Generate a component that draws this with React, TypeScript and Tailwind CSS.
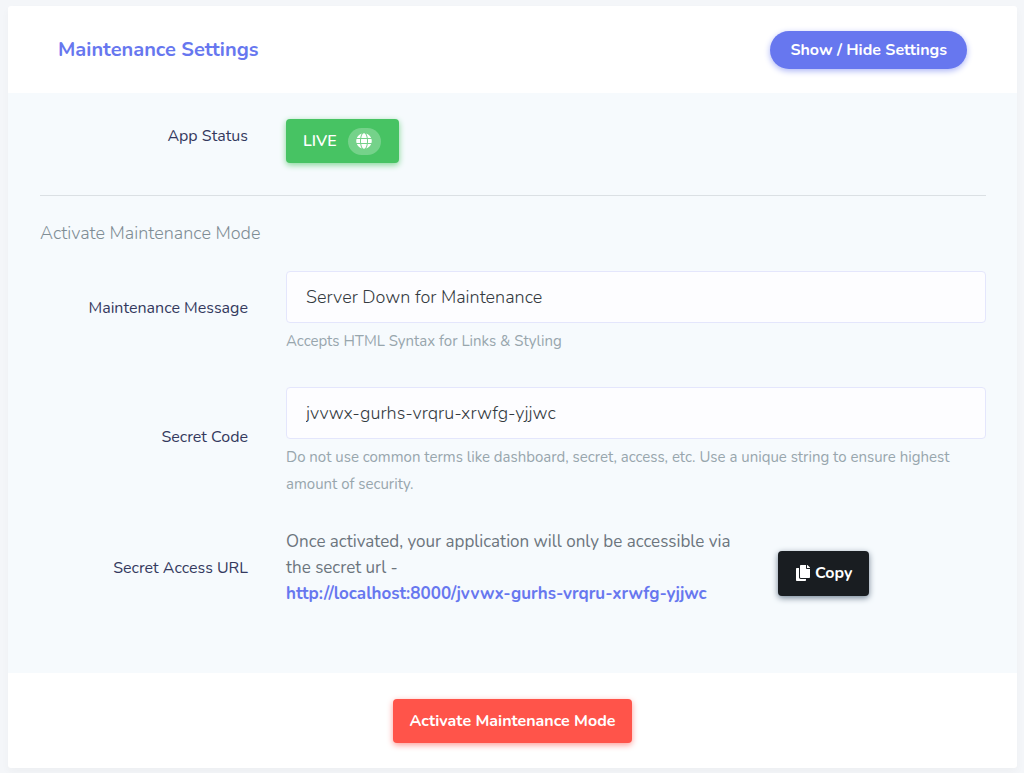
import { useState } from 'react';
import type { ReactNode } from 'react';
import { FaCopy, FaGlobe } from 'react-icons/fa';

const row = 'grid grid-cols-[208px_minmax(0,1fr)] gap-x-[38px]';
const label = 'text-right text-[16px] leading-6 text-[#34395e]';
const field =
  'block h-[52px] w-full rounded-[4px] border border-[#e4e6fc] bg-[#fdfdff] px-[19px] text-[18px] font-light text-[#343a40] outline-none focus:border-[#95a0f4]';

function Hint({ id, children }: { id: string; children: ReactNode }) {
  return (
    <p id={id} className="mt-[5px] text-[15px] leading-[27px] text-[#98a6ad]">
      {children}
    </p>
  );
}

export default function App() {
  const [open, setOpen] = useState(true);
  const [message, setMessage] = useState('Server Down for Maintenance');
  const [secret, setSecret] = useState('jvvwx-gurhs-vrqru-xrwfg-yjjwc');
  const url = `http://localhost:8000/${secret}`;

  return (
    <div className="min-h-screen bg-[#f4f6f9] pt-[6px] pr-[7px] pb-[5px] pl-2 font-[Nunito,Lato,sans-serif] text-[#6c757d]">
      <main className="rounded-[3px] bg-white shadow-[0_4px_8px_rgba(0,0,0,0.03)]">
        <header className="flex items-center justify-between px-[50px] pt-[25px] pb-6">
          <h1 className="text-[20px] leading-7 font-bold text-[#6777ef]">Maintenance Settings</h1>
          <button
            type="button"
            aria-expanded={open}
            onClick={() => setOpen(!open)}
            className="h-[38px] rounded-full bg-[#6777ef] px-5 text-[16px] leading-6 font-bold text-white shadow-[0_2px_6px_#acb5f6]"
          >
            Show / Hide Settings
          </button>
        </header>

        {open && (
          <section className="bg-[#f6fafd] pt-[26px] pr-[31px] pb-[66px] pl-8">
            <div className={row}>
              <span className={`${label} pt-[5px]`}>App Status</span>
              <div>
                <button
                  type="button"
                  className="flex h-11 items-center gap-[11px] rounded-[4px] bg-[#47c363] pr-[18px] pl-[17px] text-[16px] leading-6 font-semibold text-white shadow-[0_2px_6px_#81d694]"
                >
                  LIVE
                  <span className="flex h-[27px] w-[33px] items-center justify-center rounded-full bg-white/25">
                    <FaGlobe className="size-4" aria-hidden="true" />
                  </span>
                </button>
              </div>
            </div>

            <hr className="mt-8 border-[#dbe0e4]" />

            <h2 className="mt-6 text-[18px] leading-[27px] font-light text-[#7f8d95]">Activate Maintenance Mode</h2>

            <div className={`${row} mt-6`}>
              <label htmlFor="message" className={`${label} pt-[25px]`}>
                Maintenance Message
              </label>
              <div>
                <input
                  id="message"
                  type="text"
                  value={message}
                  onChange={(e) => setMessage(e.target.value)}
                  aria-describedby="message-hint"
                  className={field}
                />
                <Hint id="message-hint">Accepts HTML Syntax for Links &amp; Styling</Hint>
              </div>
            </div>

            <div className={`${row} mt-8 items-center`}>
              <label htmlFor="secret" className={`${label} pb-3`}>
                Secret Code
              </label>
              <div>
                <input
                  id="secret"
                  type="text"
                  value={secret}
                  onChange={(e) => setSecret(e.target.value)}
                  aria-describedby="secret-hint"
                  className={field}
                />
                <Hint id="secret-hint">
                  Do not use common terms like dashboard, secret, access, etc. Use a unique string to ensure highest
                  amount of security.
                </Hint>
              </div>
            </div>

            <div className={`${row} mt-[31px] items-center`}>
              <span className={label}>Secret Access URL</span>
              <div className="flex items-center gap-8">
                <p className="w-[460px] text-[17px] leading-[26px] text-[#6c757d]">
                  Once activated, your application will only be accessible via the secret url -{' '}
                  <a href={url} className="block font-bold text-[#6777ef]">
                    {url}
                  </a>
                </p>
                <button
                  type="button"
                  onClick={() => navigator.clipboard?.writeText(url)}
                  className="mt-[11px] flex h-[45px] items-center gap-1 rounded-[4px] bg-[#191d21] px-[17px] pb-px text-[16px] leading-6 font-bold text-white shadow-[0_2px_6px_#728394]"
                >
                  <FaCopy className="size-4" aria-hidden="true" />
                  Copy
                </button>
              </div>
            </div>
          </section>
        )}

        <footer className="flex justify-center pt-[26px] pb-[25px]">
          <button
            type="button"
            className="h-11 rounded-[4px] bg-[#ff544a] px-4 text-[16px] leading-6 font-bold text-white shadow-[0_2px_6px_#fd9b96]"
          >
            Activate Maintenance Mode
          </button>
        </footer>
      </main>
    </div>
  );
}
